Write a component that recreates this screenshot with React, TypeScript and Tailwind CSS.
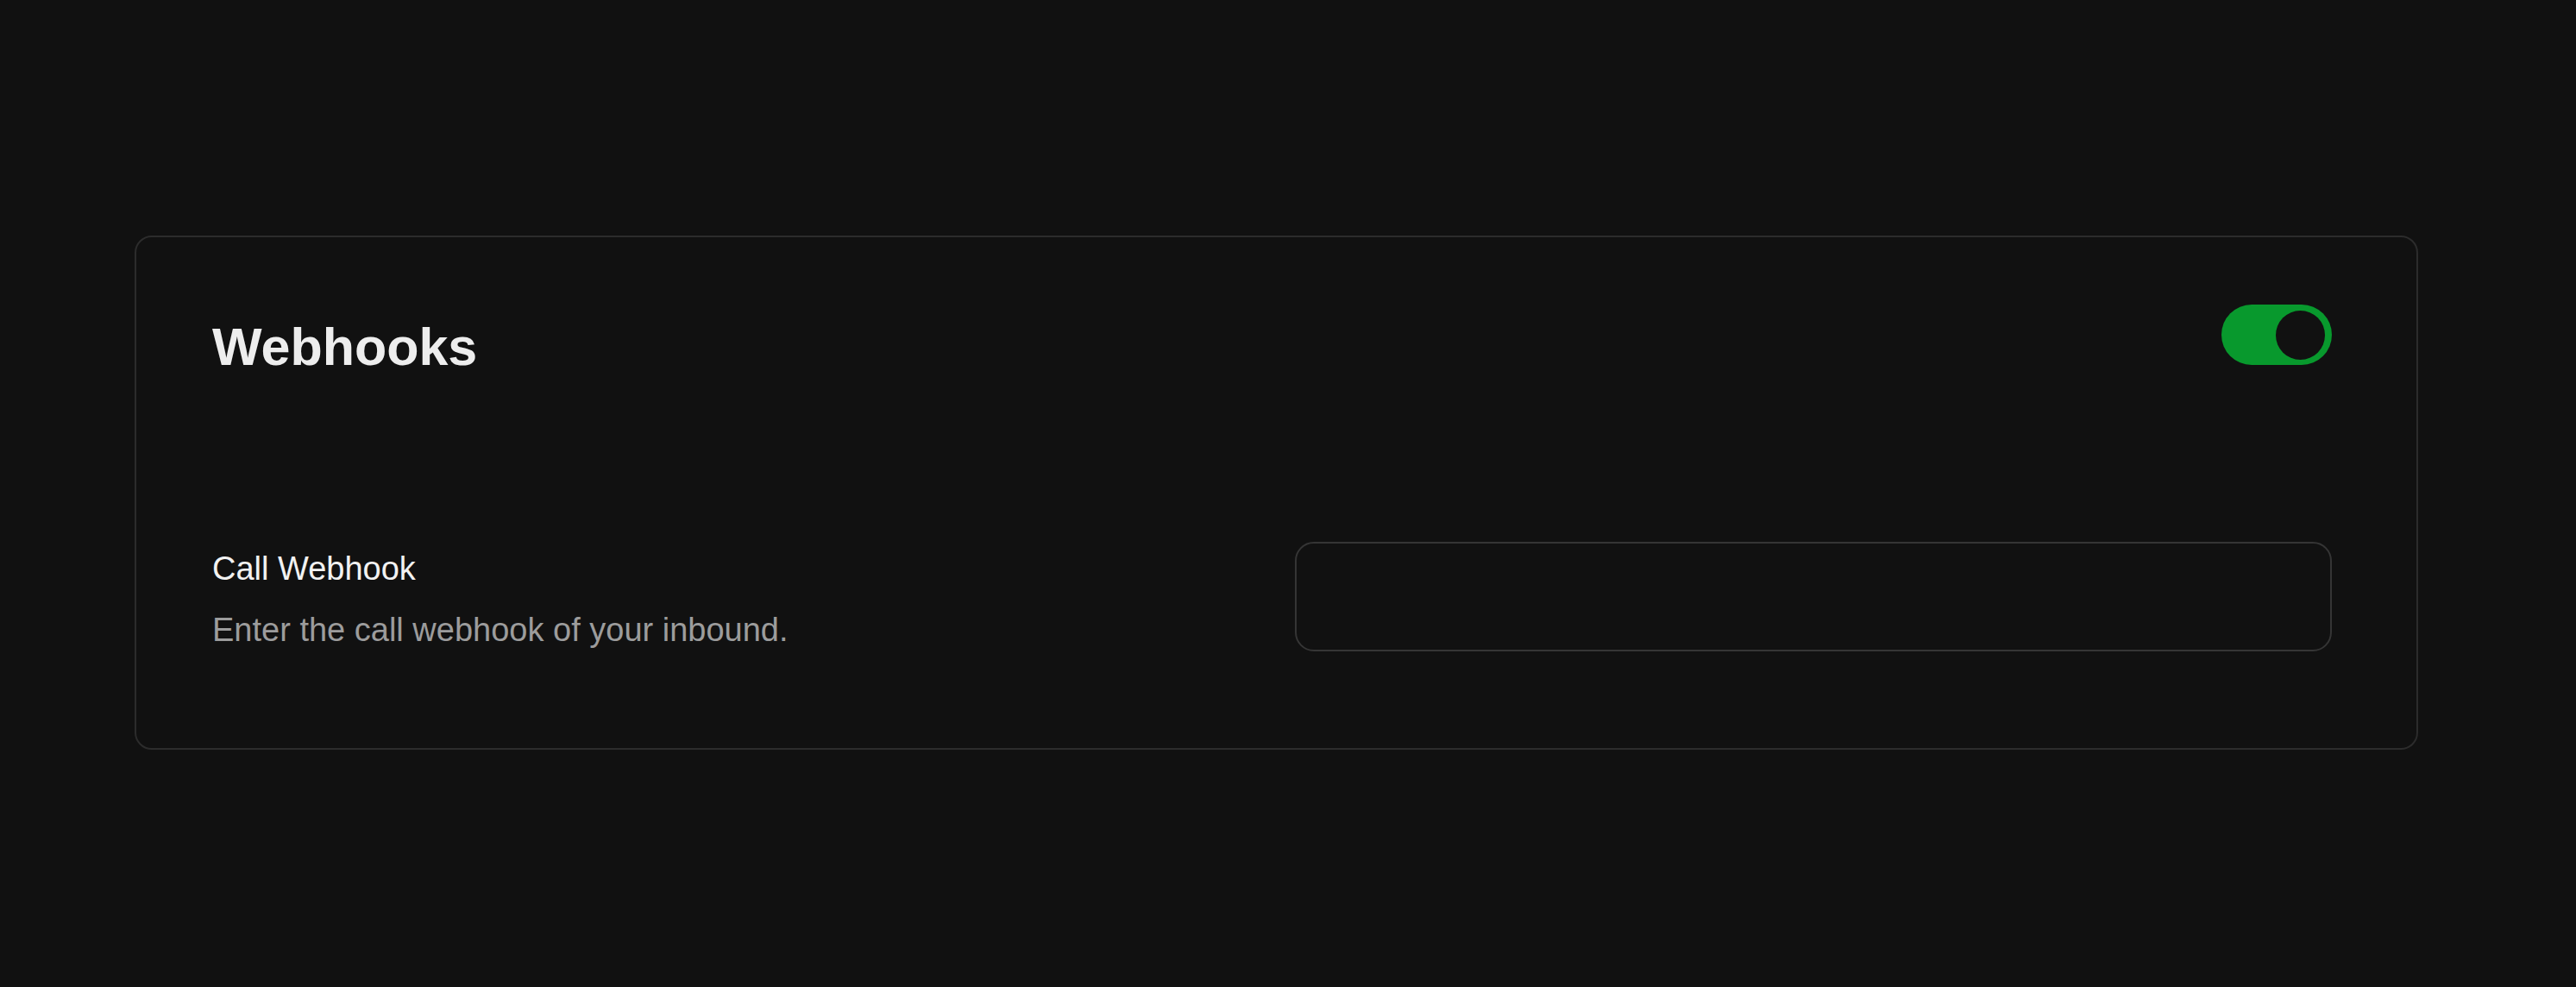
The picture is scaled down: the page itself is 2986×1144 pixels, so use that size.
import { useState } from "react";

export default function App() {
  const [enabled, setEnabled] = useState(true);
  const [hook, setHook] = useState("");

  return (
    <div
      className="min-h-[1144px] w-full bg-[#111111] pt-[273px] pl-[156px]"
      style={{ fontFamily: '"Liberation Sans", Arial, sans-serif' }}
    >
      <div className="w-[2647px] rounded-[20px] border-2 border-[#2c2c2c] bg-[#111111] pt-[78px] pb-[112px] pl-[88px] pr-[98px]">
        {/* header */}
        <div className="flex items-start justify-between">
          <h2 className="mt-[19px] text-[61px] leading-[60px] font-bold text-[#ededed]">
            Webhooks
          </h2>
          <button
            type="button"
            role="switch"
            aria-checked={enabled}
            onClick={() => setEnabled((prev) => !prev)}
            className={`flex h-[70px] w-[128px] items-center rounded-full px-[8px] ${
              enabled ? "justify-end bg-[#08992d]" : "justify-start bg-[#3a3a3a]"
            }`}
          >
            <span className="block h-[57px] w-[57px] rounded-full bg-[#111111]" />
          </button>
        </div>

        {/* call webhook row */}
        <div className="mt-[196px] flex items-center justify-between">
          <div className="flex flex-col gap-[27px] pt-[5px]">
            <p className="text-[38px] leading-[44px] text-[#f2f2f2]">Call Webhook</p>
            <p className="text-[38px] leading-[44px] text-[#9c9c9c]">
              Enter the call webhook of your inbound.
            </p>
          </div>
          <input
            type="text"
            value={hook}
            onChange={(e) => setHook(e.target.value)}
            className="h-[127px] w-[1202px] rounded-[22px] border-2 border-[#353535] bg-[#111111] px-[32px] text-[34px] text-[#ededed] outline-none"
          />
        </div>
      </div>
    </div>
  );
}
